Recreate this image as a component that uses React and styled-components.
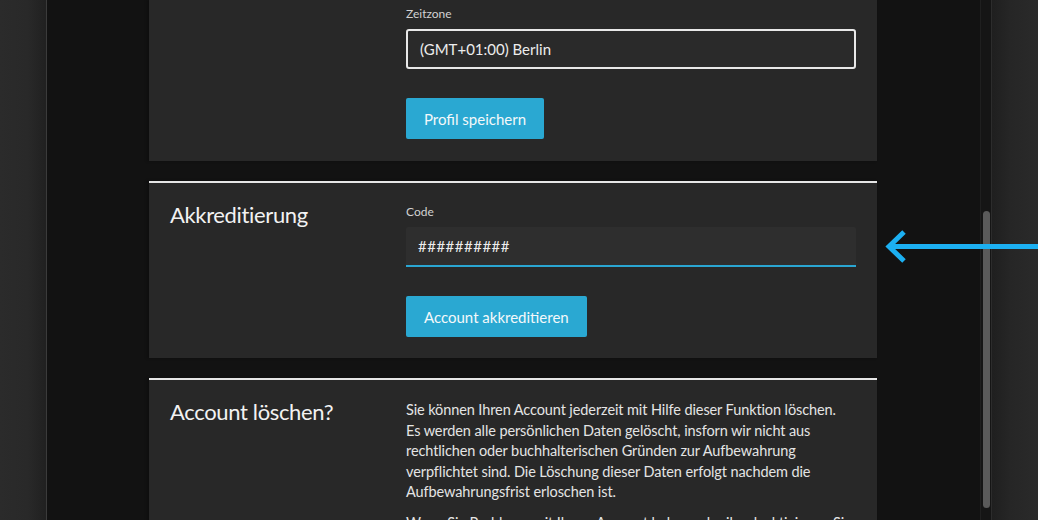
import React from "react";
import styled, { createGlobalStyle } from "styled-components";

const GlobalStyle = createGlobalStyle`
  html, body { margin: 0; padding: 0; background: #121212; overflow: hidden; }
  body { font-family: Lato, "Noto Sans", sans-serif; -webkit-font-smoothing: antialiased; }
  * { box-sizing: border-box; }
`;

const Frame = styled.div`
  position: relative;
  display: flex;
  width: 1038px;
  height: 520px;
  overflow: hidden;
  background: #121212;
`;

const LeftRail = styled.div`
  width: 47px;
  flex: none;
  background: linear-gradient(to right, #2b2b2b 0%, #292929 60%, #212121 97%);
  border-right: 1px solid #3b3b3b;
`;

const Main = styled.div`
  flex: 1;
  display: flex;
  flex-direction: column;
  gap: 20px;
  padding-left: 102px;
  overflow: hidden;
`;

const Card = styled.section`
  flex: none;
  width: 728px;
  display: grid;
  grid-template-columns: 236px 450px;
  padding: ${(p) => (p.$top ? "5px 21px 22px" : "20px 21px 21px")};
  background: #282828;
  border-top: ${(p) => (p.$top ? "none" : "2px solid #e6e6e6")};
  box-shadow: -2px 0 3px rgba(0, 0, 0, 0.25);
`;

const Title = styled.h2`
  margin: 0;
  font-size: 22px;
  line-height: 23px;
  font-weight: 400;
  letter-spacing: -0.35px;
  color: #f2f2f2;
`;

const Field = styled.div`
  display: flex;
  flex-direction: column;
  align-items: flex-start;
`;

const Label = styled.label`
  font-size: 12px;
  line-height: 18px;
  color: #d2d2d2;
  margin-bottom: 6px;
`;

const Input = styled.div`
  width: 450px;
  height: 40px;
  display: flex;
  align-items: center;
  padding: 0 12px;
  font-size: 15px;
  color: #ededed;
  background: ${(p) => (p.$filled ? "#2e2e2e" : "#2a2a2a")};
  border: ${(p) => (p.$filled ? "none" : "2px solid #e8e8e8")};
  border-bottom: ${(p) => (p.$filled ? "2px solid #2aa6d2" : "2px solid #e8e8e8")};
  border-radius: ${(p) => (p.$filled ? "2px 2px 0 0" : "3px")};
  letter-spacing: ${(p) => (p.$filled ? "0.5px" : "0")};
`;

const Button = styled.button`
  margin-top: 29px;
  height: 41px;
  padding: 0 18px;
  border: none;
  border-radius: 2px;
  background: #2aa8d2;
  color: #f4f8fa;
  font-family: inherit;
  font-size: 15px;
`;

const Text = styled.p`
  margin: 0 0 10px;
  font-size: 14.5px;
  line-height: 20.5px;
  letter-spacing: -0.1px;
  color: #e4e4e4;
  white-space: ${(p) => (p.$wrap ? "normal" : "nowrap")};
`;

const Track = styled.div`
  width: 12px;
  flex: none;
  background: #151515;
  border-left: 1px solid #1f1f1f;
  border-right: 1px solid #2c2c2c;
  padding: 211px 0 0 2px;
`;

const Thumb = styled.div`
  width: 7px;
  height: 297px;
  border-radius: 4px;
  background: #5a5a5a;
`;

const RightRail = styled.div`
  width: 46px;
  flex: none;
  background: linear-gradient(to right, #1f1f1f 0%, #262626 40%, #2a2a2a 100%);
`;

const Arrow = styled.svg`
  position: absolute;
  left: 880px;
  top: 226px;
  width: 158px;
  height: 42px;
  pointer-events: none;
`;

export default function App() {
  return (
    <>
      <GlobalStyle />
      <Frame>
        <LeftRail />
        <Main>
          <Card $top>
            <div />
            <Field>
              <Label>Zeitzone</Label>
              <Input>(GMT+01:00) Berlin</Input>
              <Button>Profil speichern</Button>
            </Field>
          </Card>
          <Card>
            <Title>Akkreditierung</Title>
            <Field>
              <Label>Code</Label>
              <Input $filled>##########</Input>
              <Button>Account akkreditieren</Button>
            </Field>
          </Card>
          <Card>
            <Title>Account löschen?</Title>
            <div>
              <Text>
                Sie können Ihren Account jederzeit mit Hilfe dieser Funktion löschen.
                <br />
                Es werden alle persönlichen Daten gelöscht, insforn wir nicht aus
                <br />
                rechtlichen oder buchhalterischen Gründen zur Aufbewahrung
                <br />
                verpflichtet sind. Die Löschung dieser Daten erfolgt nachdem die
                <br />
                Aufbewahrungsfrist erloschen ist.
              </Text>
              <Text $wrap>
                Wenn Sie Probleme mit Ihrem Account haben oder ihn deaktivieren, Sie bitte
                wenden Sie sich an unseren Support.
              </Text>
            </div>
          </Card>
        </Main>
        <Track>
          <Thumb />
        </Track>
        <RightRail />
        <Arrow viewBox="0 0 158 42">
          <line x1="10" y1="20.5" x2="158" y2="20.5" stroke="#1cb0f2" strokeWidth="5" />
          <polyline
            points="24,6 9,20.5 24,35"
            fill="none"
            stroke="#1cb0f2"
            strokeWidth="5"
          />
        </Arrow>
      </Frame>
    </>
  );
}
